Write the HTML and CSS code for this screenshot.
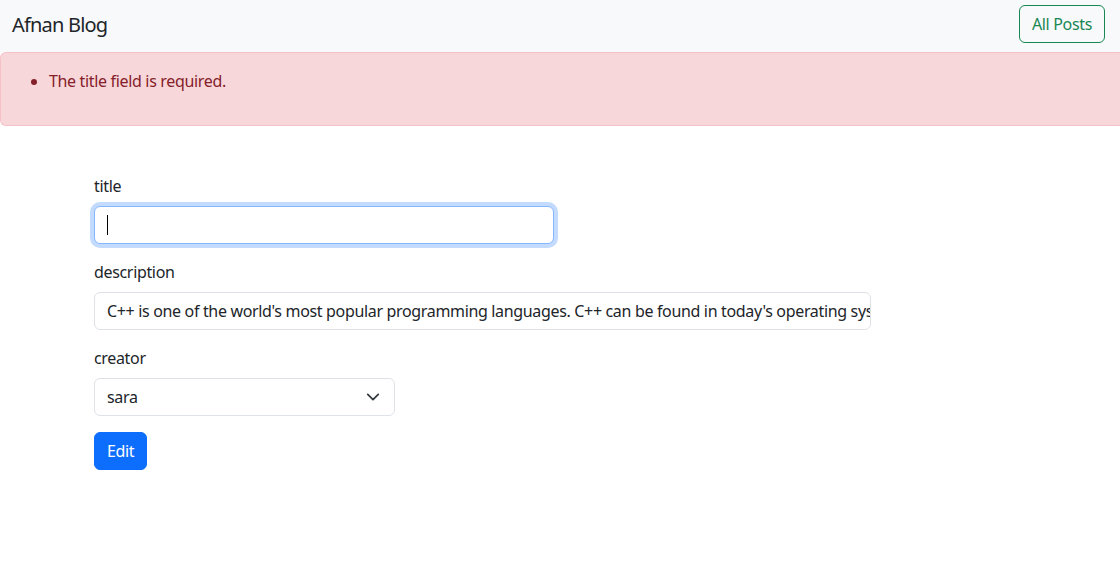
FILE: index.html
```html
<!DOCTYPE html>
<html lang="en">
<head>
<meta charset="utf-8">
<title>Afnan Blog</title>
<link rel="stylesheet" href="styles.css">
</head>
<body>
<nav class="navbar">
  <span class="brand">Afnan Blog</span>
  <a class="btn-outline" href="#">All Posts</a>
</nav>
<div class="alert">
  <ul>
    <li>The title field is required.</li>
  </ul>
</div>
<form class="form">
  <div class="field">
    <label>title</label>
    <div class="input input-title focused"><span class="caret"></span></div>
  </div>
  <div class="field">
    <label>description</label>
    <div class="input input-desc"><span class="value">C++ is one of the world's most popular programming languages. C++ can be found in today's operating systems</span></div>
  </div>
  <div class="field">
    <label>creator</label>
    <div class="input input-select"><span class="value">sara</span>
      <svg class="chev" width="16" height="16" viewBox="0 0 16 16"><path fill="none" stroke="#343a40" stroke-linecap="round" stroke-linejoin="round" stroke-width="2" d="m2 5 6 6 6-6"/></svg>
    </div>
  </div>
  <button type="button" class="btn-primary">Edit</button>
</form>
</body>
</html>
```
FILE: styles.css
```css
* { box-sizing: border-box; }
html, body { margin: 0; padding: 0; }
body {
  width: 1120px;
  height: 572px;
  overflow: hidden;
  background: #fff;
  color: #212529;
  font-family: "Noto Sans", "Open Sans", sans-serif;
  font-size: 16px;
  line-height: 24px;
  letter-spacing: -0.021em;
}
.navbar {
  height: 52px;
  background: #f8f9fa;
  display: flex;
  justify-content: space-between;
  align-items: flex-start;
  padding: 5px 15px 0 12px;
}
.brand {
  font-size: 20px;
  line-height: 30px;
  margin-top: 5px;
  color: #212529;
  letter-spacing: -0.04em;
}
.btn-outline {
  display: block;
  height: 38px;
  padding: 6px 12px;
  border: 1px solid #198754;
  border-radius: 6px;
  color: #198754;
  text-decoration: none;
  font-size: 16px;
  line-height: 24px;
}
.alert {
  height: 74px;
  background: #f8d7da;
  border: 1px solid #f5c2c7;
  border-right: none;
  border-radius: 6px 0 0 6px;
  color: #842029;
  padding: 16px;
}
.alert ul {
  margin: 0;
  padding-left: 32px;
}
.form {
  padding: 48px 0 0 94px;
}
.field { margin-bottom: 16px; }
.field label {
  display: block;
  margin-bottom: 8px;
  line-height: 24px;
}
.input {
  height: 38px;
  border: 1px solid #dee2e6;
  border-radius: 6px;
  padding: 6px 12px;
  display: flex;
  align-items: center;
  overflow: hidden;
  white-space: nowrap;
  background: #fff;
}
.input-title { width: 460px; }
.input-desc { width: 777px; }
.input-select { width: 301px; justify-content: space-between; padding-right: 14px; }
.focused {
  border-color: #86b7fe;
  box-shadow: 0 0 0 4px rgba(13, 110, 253, 0.25);
}
.caret {
  display: block;
  width: 1px;
  height: 20px;
  background: #000;
}
.chev { flex: none; width: 14px; height: 14px; }
.btn-primary {
  display: block;
  height: 38px;
  padding: 6px 12px;
  border: 1px solid #0d6efd;
  border-radius: 6px;
  background: #0d6efd;
  color: #fff;
  font-family: inherit;
  font-size: 16px;
  line-height: 24px;
  letter-spacing: inherit;
}
```
